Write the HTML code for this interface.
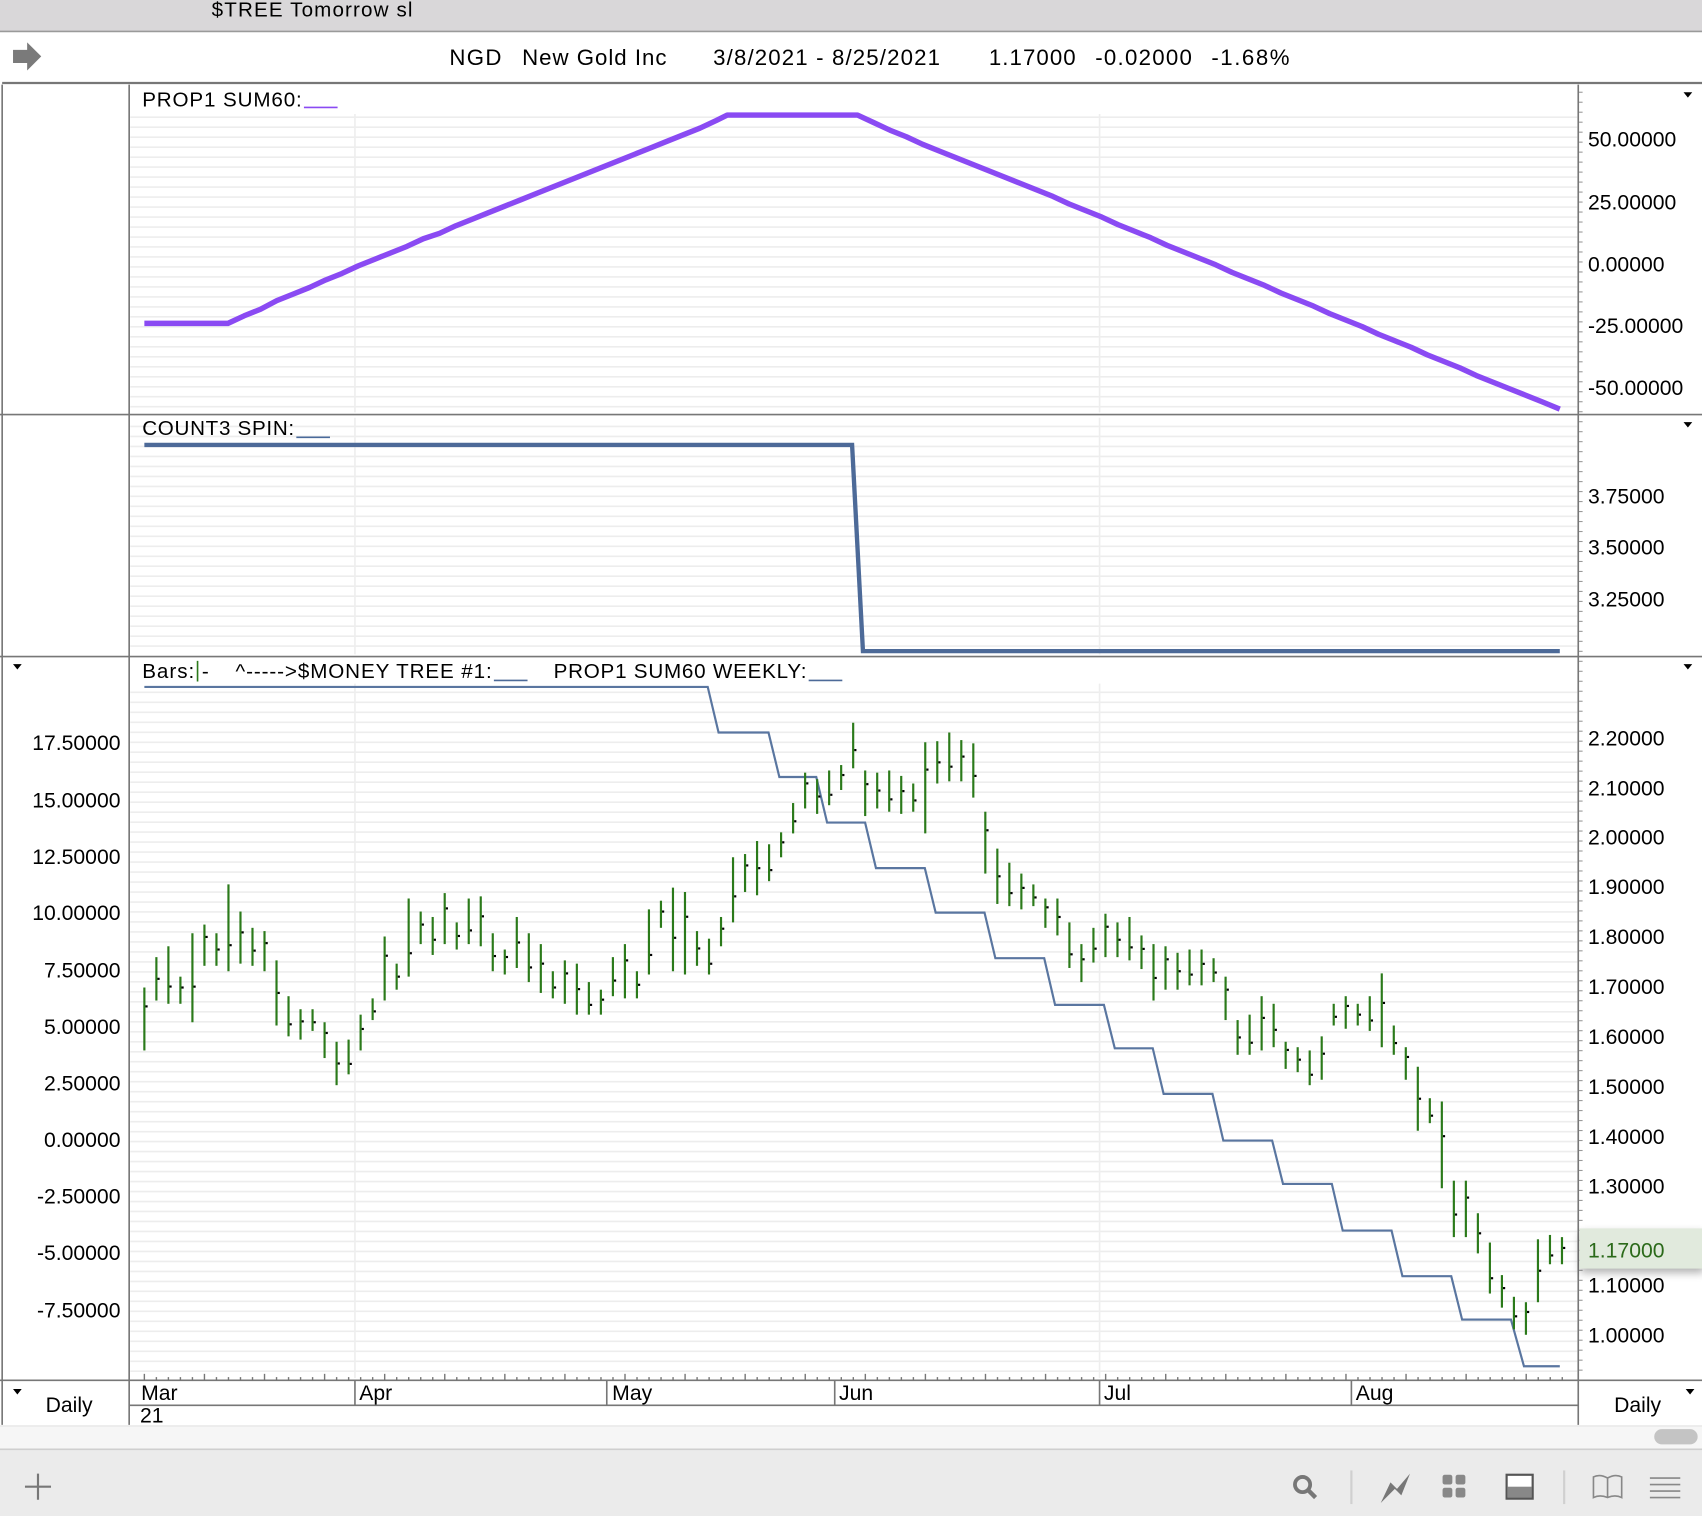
<!DOCTYPE html>
<html><head><meta charset="utf-8"><style>
html,body{margin:0;padding:0;background:#fff;overflow:hidden}
svg{display:block}
text{font-family:"Liberation Sans",Arial,sans-serif;fill:#000}
</style></head><body>
<svg id="s" width="1702" height="1516" viewBox="0 0 1568 1397" preserveAspectRatio="none" xmlns="http://www.w3.org/2000/svg">
<rect width="1568" height="1397" fill="#fff"/>
<rect x="0" y="0" width="1568" height="29" fill="#d9d7d9"/>
<line x1="0" y1="29" x2="1568" y2="29" fill="none" stroke="#9a9a9a" stroke-width="1.5"/>
<text x="195" y="15" font-size="19" textLength="185">$TREE Tomorrow sl</text>
<path d="M12 46 H25 V39 L38 52 L25 65 V58 H12 Z" fill="#7a7a7a"/>
<text x="414" y="60" font-size="20.5" textLength="48">NGD</text>
<text x="481" y="60" font-size="20.5" textLength="133">New Gold Inc</text>
<text x="657" y="60" font-size="20.5" textLength="209">3/8/2021 - 8/25/2021</text>
<text x="911" y="60" font-size="20.5" textLength="80">1.17000</text>
<text x="1009" y="60" font-size="20.5" textLength="89">-0.02000</text>
<text x="1116" y="60" font-size="20.5" textLength="72">-1.68%</text>
<line x1="2" y1="76.5" x2="1568" y2="76.5" stroke="#777" stroke-width="2"/>
<g id="grid"></g>
<g stroke="#777" stroke-width="1.5" fill="none">
<line x1="119" y1="78" x2="119" y2="1313"/>
<line x1="1454" y1="78" x2="1454" y2="1313"/>
<line x1="2" y1="78" x2="2" y2="1313"/>
<line x1="0" y1="382" x2="1568" y2="382"/>
<line x1="0" y1="605" x2="1568" y2="605"/>
<line x1="0" y1="1272" x2="1568" y2="1272"/>
<line x1="119" y1="1295" x2="1454" y2="1295"/>
</g>
<text x="131" y="98" font-size="19" textLength="147">PROP1 SUM60:</text>
<line x1="280" y1="99" x2="311" y2="99" stroke="#8a4af3" stroke-width="1.5"/>
<path d="M133 298 L210 298 L225 291 L240 285 L255 277 L270 271 L285 265 L300 258 L315 252 L330 245 L345 239 L360 233 L375 227 L390 220 L405 215 L420 208 L435 202 L450 196 L465 190 L480 184 L495 178 L510 172 L525 166 L540 160 L555 154 L570 148 L585 142 L600 136 L615 130 L630 124 L645 118 L660 111 L670 106 L790 106 L805 113 L820 120 L835 126 L850 133 L865 139 L880 145 L895 151 L910 157 L925 163 L940 169 L955 175 L970 181 L985 188 L1000 194 L1015 200 L1030 207 L1045 213 L1060 219 L1075 226 L1090 232 L1105 238 L1120 244 L1135 251 L1150 257 L1165 263 L1180 270 L1195 276 L1210 282 L1225 289 L1240 295 L1255 301 L1270 308 L1285 314 L1300 320 L1315 327 L1330 333 L1345 339 L1360 346 L1375 352 L1390 358 L1405 364 L1420 370 L1437 377" fill="none" stroke="#8a4af3" stroke-width="5" stroke-linejoin="round"/>
<g font-size="19.5">
<text x="1463" y="135">50.00000</text>
<text x="1463" y="193">25.00000</text>
<text x="1463" y="250">0.00000</text>
<text x="1463" y="307">-25.00000</text>
<text x="1463" y="364">-50.00000</text>
</g>
<path d="M1551 85 h8 l-4 5z M1551 389 h8 l-4 5z M1551 612 h8 l-4 5z M12 612 h8 l-4 5z M12 1280 h8 l-4 5z M1553 1280 h8 l-4 5z" fill="#000"/>
<text x="131" y="401" font-size="19" textLength="140">COUNT3 SPIN:</text>
<line x1="273" y1="403" x2="304" y2="403" stroke="#4a6a9a" stroke-width="1.5"/>
<path d="M133 410 L785 410 L795 600 L1437 600" fill="none" stroke="#4d6a98" stroke-width="4"/>
<g font-size="19.5">
<text x="1463" y="464">3.75000</text>
<text x="1463" y="511">3.50000</text>
<text x="1463" y="559">3.25000</text>
</g>
<text x="131" y="625" font-size="19" textLength="48">Bars:</text>
<line x1="182" y1="609" x2="182" y2="628" stroke="#2b7a1a" stroke-width="1.5"/>
<text x="186" y="625" font-size="19">-</text>
<text x="217" y="625" font-size="19" textLength="236">^-----&gt;$MONEY TREE #1:</text>
<line x1="455" y1="627" x2="486" y2="627" stroke="#4d6a98" stroke-width="1.5"/>
<text x="510" y="625" font-size="19" textLength="233">PROP1 SUM60 WEEKLY:</text>
<line x1="745" y1="627" x2="776" y2="627" stroke="#4d6a98" stroke-width="1.5"/>
<path d="M133 633 L652 633 L662 675 L708 675 L718 716 L752 716 L762 758 L797 758 L807 800 L852 800 L862 841 L907 841 L917 883 L962 883 L972 926 L1017 926 L1027 966 L1062 966 L1072 1008 L1117 1008 L1127 1051 L1172 1051 L1182 1091 L1227 1091 L1237 1134 L1282 1134 L1292 1176 L1337 1176 L1347 1216 L1392 1216 L1404 1259 L1437 1259" fill="none" stroke="#5a76a0" stroke-width="2"/>
<g id="bars"></g>
<g font-size="19.5" text-anchor="end">
<text x="111" y="691">17.50000</text>
<text x="111" y="744">15.00000</text>
<text x="111" y="796">12.50000</text>
<text x="111" y="848">10.00000</text>
<text x="111" y="901">7.50000</text>
<text x="111" y="953">5.00000</text>
<text x="111" y="1005">2.50000</text>
<text x="111" y="1057">0.00000</text>
<text x="111" y="1109">-2.50000</text>
<text x="111" y="1161">-5.00000</text>
<text x="111" y="1214">-7.50000</text>
</g>
<g font-size="19.5">
<text x="1463" y="687">2.20000</text>
<text x="1463" y="733">2.10000</text>
<text x="1463" y="778">2.00000</text>
<text x="1463" y="824">1.90000</text>
<text x="1463" y="870">1.80000</text>
<text x="1463" y="916">1.70000</text>
<text x="1463" y="962">1.60000</text>
<text x="1463" y="1008">1.50000</text>
<text x="1463" y="1054">1.40000</text>
<text x="1463" y="1100">1.30000</text>
<text x="1463" y="1191">1.10000</text>
<text x="1463" y="1237">1.00000</text>
</g>
<defs><filter id="sh" x="-20%" y="-50%" width="140%" height="200%"><feGaussianBlur stdDeviation="4"/></filter></defs>
<rect x="1456" y="1136" width="114" height="37" fill="#000" opacity="0.3" filter="url(#sh)"/>
<rect x="1455" y="1132" width="113" height="37" fill="#e1eadd"/>
<text x="1463" y="1159" font-size="19.5" style="fill:#2b6a1a">1.17000</text>
<g id="ticks" stroke="#777" stroke-width="1.3"></g>
<g stroke="#777" stroke-width="1.5">
<line x1="327" y1="1272" x2="327" y2="1295"/><line x1="559" y1="1272" x2="559" y2="1295"/>
<line x1="769" y1="1272" x2="769" y2="1295"/><line x1="1013" y1="1272" x2="1013" y2="1295"/>
<line x1="1245" y1="1272" x2="1245" y2="1295"/>
</g>
<g font-size="19.5">
<text x="130" y="1290">Mar</text><text x="331" y="1290">Apr</text><text x="564" y="1290">May</text>
<text x="773" y="1290">Jun</text><text x="1017" y="1290">Jul</text><text x="1249" y="1290">Aug</text>
<text x="129" y="1311">21</text>
<text x="42" y="1301">Daily</text><text x="1487" y="1301">Daily</text>
</g>
<rect x="0" y="1314" width="1568" height="21" fill="#f6f6f6"/>
<line x1="0" y1="1314" x2="1568" y2="1314" stroke="#e2e2e2"/>
<rect x="1524" y="1317" width="40" height="14" rx="7" fill="#c4c4c4"/>
<rect x="0" y="1335" width="1568" height="62" fill="#ebebeb"/>
<line x1="0" y1="1335.5" x2="1568" y2="1335.5" stroke="#cfcfcf" stroke-width="1.5"/>
<path d="M35 1358 V1382 M23 1370 H47" stroke="#777" stroke-width="2"/>
<circle cx="1200" cy="1368" r="7" fill="none" stroke="#777" stroke-width="3.5"/>
<line x1="1205" y1="1373" x2="1212" y2="1380" stroke="#777" stroke-width="4"/>
<line x1="1245" y1="1355" x2="1245" y2="1386" stroke="#d0d0d0" stroke-width="2"/>
<line x1="1441" y1="1355" x2="1441" y2="1386" stroke="#d0d0d0" stroke-width="2"/>
<path d="M1272 1385 L1281 1366 L1287 1372 L1299 1358 L1291 1378 L1285 1372 Z" fill="#777"/>
<g fill="#888"><rect x="1329" y="1359" width="9" height="9" rx="2"/><rect x="1341" y="1359" width="9" height="9" rx="2"/><rect x="1329" y="1371" width="9" height="9" rx="2"/><rect x="1341" y="1371" width="9" height="9" rx="2"/></g>
<rect x="1388" y="1359" width="24" height="22" fill="#fff" stroke="#555" stroke-width="2"/>
<rect x="1389" y="1370" width="22" height="10" fill="#888"/>
<path d="M1468 1361 Q1474 1358 1481 1362 Q1488 1358 1494 1361 V1380 Q1488 1377 1481 1380 Q1474 1377 1468 1380 Z M1481 1362 V1380" fill="none" stroke="#888" stroke-width="1.5"/>
<path d="M1520 1362 H1548 M1520 1368 H1548 M1520 1374 H1548 M1520 1380 H1548" stroke="#888" stroke-width="1.5"/>
</svg>
<script>
var NS="http://www.w3.org/2000/svg";
function el(p,t,a){var e=document.createElementNS(NS,t);for(var k in a)e.setAttribute(k,a[k]);p.appendChild(e);return e;}
var g=document.getElementById("grid");
[[100,380],[385,603],[630,1270]].forEach(function(r){for(var y=r[0]+8;y<r[1];y+=9.2)el(g,"line",{x1:120,x2:1453,y1:y,y2:y,stroke:"#ededed","stroke-width":1.5});});
[327,1013].forEach(function(x){el(g,"line",{x1:x,x2:x,y1:105,y2:380,stroke:"#eeeeee","stroke-width":1.5});el(g,"line",{x1:x,x2:x,y1:385,y2:603,stroke:"#eeeeee","stroke-width":1.5});el(g,"line",{x1:x,x2:x,y1:630,y2:1270,stroke:"#eeeeee","stroke-width":1.5});});
for(var y=85;y<1270;y+=9.2){el(g,"line",{x1:1454,x2:1458,y1:y,y2:y,stroke:"#999","stroke-width":1});}
var b=[[910,968],[882,922],[872,925],[900,925],[860,942],[852,890],[860,890],[815,895],[840,888],[855,890],[858,895],[885,945],[918,955],[930,958],[930,950],[942,975],[960,1000],[958,990],[935,968],[920,940],[863,922],[888,912],[828,900],[840,870],[845,880],[823,870],[850,875],[828,870],[826,872],[860,895],[875,898],[845,892],[860,905],[870,915],[895,920],[885,925],[888,935],[905,935],[912,935],[882,918],[870,920],[895,920],[838,898],[830,855],[818,895],[822,898],[858,890],[865,898],[845,872],[790,850],[787,822],[775,825],[778,812],[767,790],[740,768],[712,745],[718,750],[710,742],[705,728],[666,708],[710,752],[712,745],[710,748],[715,750],[722,748],[684,768],[683,722],[675,720],[682,720],[685,735],[748,805],[782,833],[795,835],[805,838],[815,835],[828,855],[828,862],[850,892],[870,905],[855,887],[842,882],[850,882],[845,885],[862,893],[870,922],[872,912],[878,912],[875,908],[875,908],[883,905],[900,940],[940,972],[935,972],[918,968],[925,965],[960,985],[965,988],[968,1000],[955,995],[925,945],[918,948],[925,945],[918,950],[897,965],[945,972],[965,995],[983,1042],[1012,1035],[1015,1095],[1088,1140],[1088,1140],[1118,1155],[1145,1192],[1175,1205],[1195,1225],[1200,1230],[1142,1200],[1138,1165],[1140,1165]];
var bg=document.getElementById("bars");
var n=b.length;
b.forEach(function(v,i){var x=133+i*(1439-133)/(n-1);
el(bg,"line",{x1:x,x2:x,y1:v[0],y2:v[1],stroke:"#2b7a1a","stroke-width":2});
var c=v[0]+(v[1]-v[0])*(0.3+0.4*((i*7)%5)/4);
el(bg,"rect",{x:x+1,y:c-1,width:2,height:2,fill:"#000"});});
var tk=document.getElementById("ticks");
for(var x=133;x<1440;x+=11.07){var big=((Math.round((x-133)/11.07))%5==0);el(tk,"line",{x1:x,x2:x,y1:big?1266:1269,y2:1272});}
</script>
</body></html>
